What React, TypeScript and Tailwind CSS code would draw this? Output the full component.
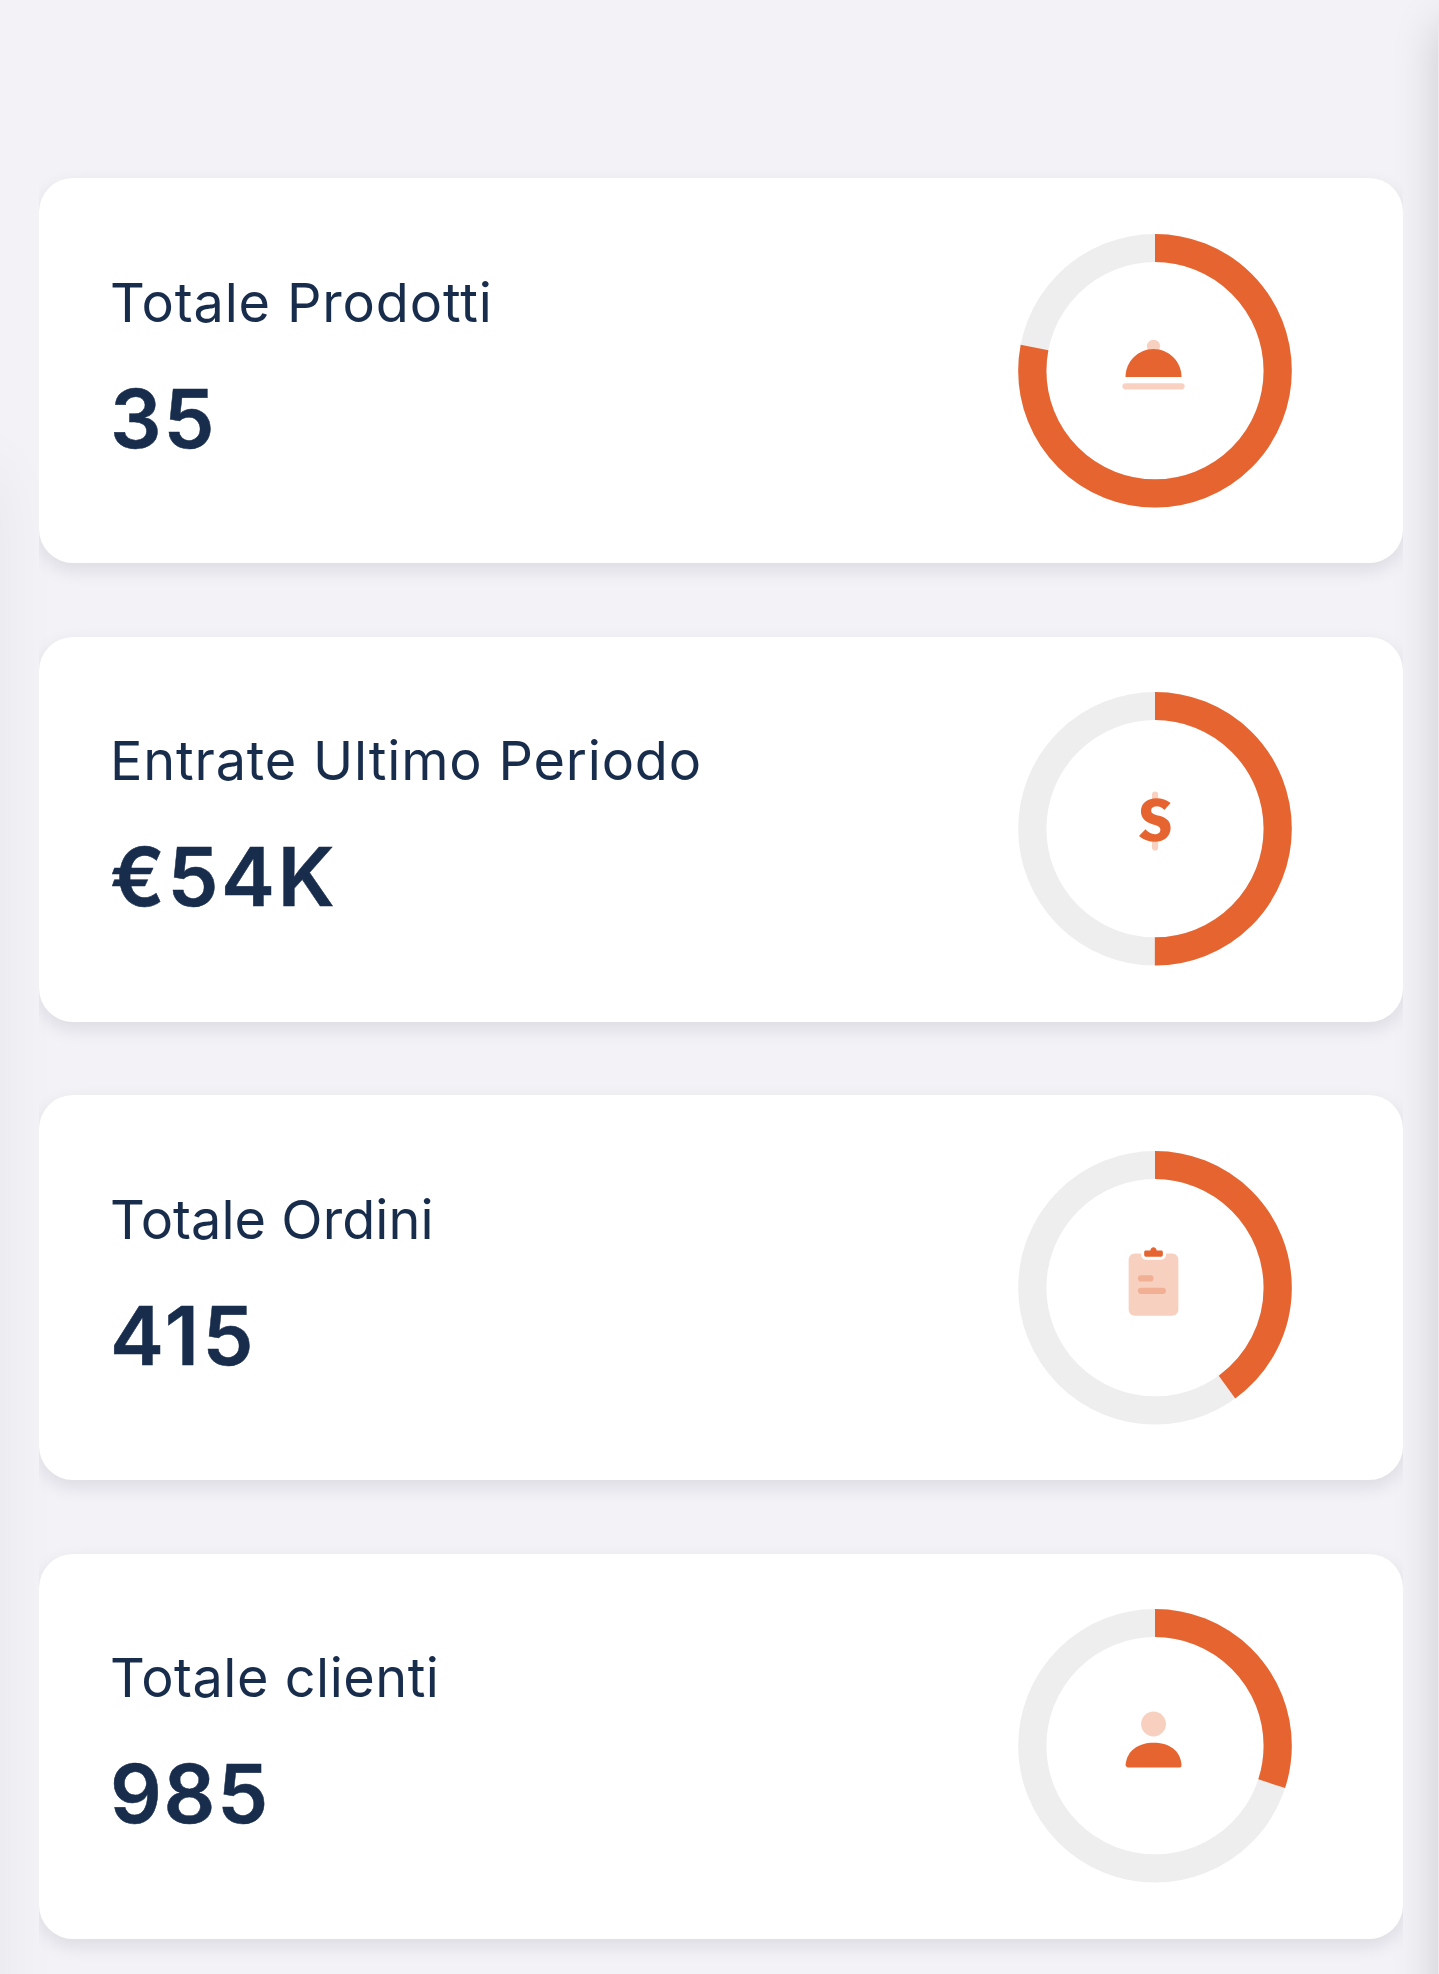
import type { ReactNode } from 'react';

const DishIcon = () => (
  <>
    <circle cx="12" cy="6.1" r="2.1" opacity="0.3" />
    <path d="M3,16 C3,11.03 7.03,7 12,7 C16.97,7 21,11.03 21,16 Z" />
    <rect x="2" y="18" width="20" height="2" rx="1" fill="#f9d1c1" />
  </>
);

const DollarIcon = () => (
  <>
    <rect x="11.5" y="2" width="2" height="5" rx="1" fill="#f9d1c1" />
    <rect x="11.5" y="16" width="2" height="5" rx="1" fill="#f9d1c1" />
    <path d="M15.5,8 C14.9,7.2 13.9,6.75 13,6.75 C12,6.75 11.25,7.3 11.25,8.2 C11.25,9.2 12.4,9.4 13.9,9.85 C16.1,10.5 17.5,11.6 17.5,13.7 C17.5,16.4 15.5,18.2 12.5,18.2 C10.5,18.2 8.7,17.5 7.33,16.3 L9.4,14.2 C10.2,15.2 11.3,15.75 12.4,15.75 C13.5,15.75 14.2,15.2 14.2,14.3 C14.2,13.3 13.2,13 11.6,12.55 C9.4,11.9 7.95,10.6 7.95,8.4 C7.95,5.8 10.1,4.2 12.9,4.2 C14.7,4.2 16.3,4.75 17.5,5.75 Z" />
  </>
);

const ClipboardIcon = () => (
  <>
    <path
      opacity="0.3"
      d="M8,3 L8,3.5 C8,4.33 8.67,5 9.5,5 L14.5,5 C15.33,5 16,4.33 16,3.5 L16,3 L18,3 C19.1,3 20,3.9 20,5 L20,21 C20,22.1 19.1,23 18,23 L6,23 C4.9,23 4,22.1 4,21 L4,5 C4,3.9 4.9,3 6,3 Z"
    />
    <path d="M11,2 C11,1.45 11.45,1 12,1 C12.55,1 13,1.45 13,2 L14.5,2 C14.78,2 15,2.22 15,2.5 L15,3.5 C15,3.78 14.78,4 14.5,4 L9.5,4 C9.22,4 9,3.78 9,3.5 L9,2.5 C9,2.22 9.22,2 9.5,2 Z" />
    <rect x="7" y="10" width="5" height="2" rx="1" opacity="0.3" />
    <rect x="7" y="14" width="9" height="2" rx="1" opacity="0.3" />
  </>
);

const UserIcon = () => (
  <>
    <circle cx="12" cy="7" r="4" opacity="0.3" />
    <path d="M3,20.2 C3.39,15.43 7.26,13 11.98,13 C16.77,13 20.7,15.29 21,20.2 C21.01,20.4 21,21 20.25,21 L3.73,21 C3.48,21 2.98,20.45 3,20.2 Z" />
  </>
);

const CIRCUMFERENCE = 2 * Math.PI * 122.7;

function Ring({ value, children }: { value: number; children: ReactNode }) {
  return (
    <svg className="h-[274px] w-[274px] shrink-0 overflow-visible" viewBox="-137 -136.7 274 274">
      <circle r="122.7" fill="none" stroke="#eeeeee" strokeWidth="28.2" />
      <circle
        r="122.7"
        fill="none"
        stroke="#e66430"
        strokeWidth="28.2"
        strokeDasharray={`${CIRCUMFERENCE * value} ${CIRCUMFERENCE}`}
        transform="rotate(-90)"
      />
      <g transform="translate(-38.8 -43.5) scale(3.11)" fill="#e66430">
        {children}
      </g>
    </svg>
  );
}

type Stat = {
  label: string;
  amount: string;
  value: number;
  icon: ReactNode;
  labelClass: string;
  amountClass: string;
};

const stats: Stat[] = [
  { label: 'Totale Prodotti', amount: '35', value: 0.78, icon: <DishIcon />, labelClass: 'tracking-[0.85px]', amountClass: 'tracking-[2px]' },
  { label: 'Entrate Ultimo Periodo', amount: '€54K', value: 0.5, icon: <DollarIcon />, labelClass: 'tracking-[0.82px]', amountClass: 'tracking-[2.6px]' },
  { label: 'Totale Ordini', amount: '415', value: 0.4, icon: <ClipboardIcon />, labelClass: 'tracking-[0.05px]', amountClass: 'tracking-[3.4px]' },
  { label: 'Totale clienti', amount: '985', value: 0.3, icon: <UserIcon />, labelClass: 'tracking-[0.52px]', amountClass: 'tracking-[1.8px]' },
];

function StatCard({ stat }: { stat: Stat }) {
  return (
    <section className="flex h-[385px] items-center justify-between rounded-[34px] bg-white pr-[111px] pl-[71px] shadow-[0_7px_18px_rgba(20,20,40,0.10)]">
      <div className="flex flex-col pb-[5px] whitespace-nowrap text-[#182c4c]">
        <h2 className={`text-[54px] leading-[66px] font-normal ${stat.labelClass}`}>{stat.label}</h2>
        <p className={`mt-[35px] text-[81px] leading-[96px] font-semibold [-webkit-text-stroke:0.5px_#182c4c] ${stat.amountClass}`}>
          {stat.amount}
        </p>
      </div>
      <Ring value={stat.value}>{stat.icon}</Ring>
    </section>
  );
}

export default function App() {
  return (
    <main className="relative h-[1974px] w-[1439px] overflow-hidden bg-[#f3f2f7] pt-[138px] font-['Inter',sans-serif]">
      <div className="absolute top-[24px] -bottom-20 left-[1438px] w-20 bg-[#ececf0] shadow-[0_0_46px_rgba(0,0,0,0.17)]" />
      <div className="absolute top-[470px] -bottom-20 -left-20 w-[76px] shadow-[0_0_70px_rgba(0,0,0,0.06)]" />
      <div className="relative mr-[36px] ml-[39px] flex flex-col gap-[73.5px] overflow-hidden pt-10 pb-10">
        {stats.map((stat) => (
          <StatCard key={stat.label} stat={stat} />
        ))}
      </div>
    </main>
  );
}
